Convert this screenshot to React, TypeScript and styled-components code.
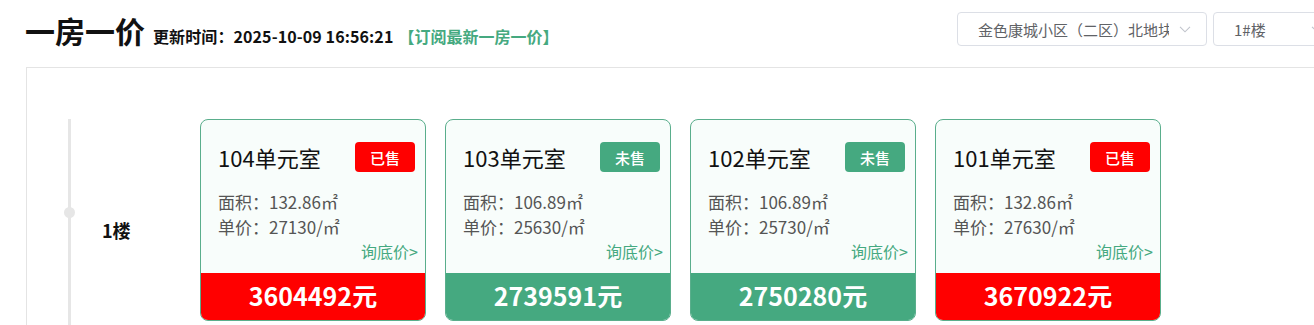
import React from "react";
import styled, { createGlobalStyle } from "styled-components";

const GREEN = "#45a980";
const RED = "#ff0000";

const Global = createGlobalStyle`
  html, body { margin: 0; padding: 0; background: #fff; overflow: hidden; }
  body { font-family: "Noto Sans CJK SC", "Noto Sans", sans-serif; color: #111; }
`;

const Page = styled.div`
  width: 1339px;
`;

const Header = styled.div`
  display: flex;
  align-items: flex-start;
  justify-content: space-between;
  height: 67px;
  padding: 0 0 0 25px;
  box-sizing: border-box;
`;

const TitleGroup = styled.div`
  display: flex;
  align-items: baseline;
  padding-top: 9px;
`;

const Title = styled.h1`
  margin: 0;
  font-size: 30px;
  font-weight: 700;
  line-height: 42px;
  color: #111;
`;

const UpdateTime = styled.span`
  margin-left: 8px;
  font-size: 16px;
  font-weight: 700;
  letter-spacing: 0.1px;
  color: #111;
`;

const SubscribeLink = styled.a`
  margin-left: 5px;
  font-size: 16px;
  font-weight: 700;
  color: ${GREEN};
  text-decoration: none;
`;

const Selects = styled.div`
  display: flex;
  gap: 6px;
  padding-top: 12px;
`;

const Select = styled.div<{ $w: number }>`
  width: ${(p) => p.$w}px;
  height: 34px;
  box-sizing: border-box;
  border: 1px solid #dcdfe6;
  border-radius: 4px;
  display: flex;
  align-items: center;
  padding: 0 15px 0 20px;
  gap: 10px;
  font-size: 15px;
  color: #606266;
`;

const SelectText = styled.span`
  flex: 1;
  white-space: nowrap;
  overflow: hidden;
`;

const Chevron = () => (
  <svg width="12" height="12" viewBox="0 0 12 12" fill="none">
    <path d="M1 3.8l5 5 5-5" stroke="#c0c4cc" strokeWidth="1.1" />
  </svg>
);

const Panel = styled.div`
  margin-left: 26px;
  border: 1px solid #e4e4e4;
  border-right: none;
  height: 300px;
  padding-top: 51px;
  box-sizing: border-box;
`;

const FloorRow = styled.div`
  display: flex;
  align-items: flex-start;
`;

const FloorCol = styled.div`
  width: 173px;
  flex: none;
  display: flex;
  align-self: stretch;
  padding-left: 41px;
  box-sizing: border-box;
  min-height: 220px;
`;

const Track = styled.div`
  position: relative;
  width: 3px;
  background: #e6e6e6;
`;

const Dot = styled.span`
  position: absolute;
  left: -4px;
  top: 88px;
  width: 11px;
  height: 11px;
  border-radius: 50%;
  background: #e6e6e6;
`;

const FloorLabel = styled.div`
  margin-left: 31px;
  padding-top: 98px;
  font-size: 18px;
  font-weight: 700;
  line-height: 26px;
  color: #111;
`;

const Cards = styled.div`
  display: flex;
  gap: 19px;
`;

const Card = styled.div`
  width: 226px;
  height: 202px;
  box-sizing: border-box;
  border: 1px solid #5aae8c;
  border-radius: 8px;
  background: #f8fdfb;
  overflow: hidden;
  display: flex;
  flex-direction: column;
`;

const CardBody = styled.div`
  flex: 1;
  padding: 22px 10px 0 17px;
  display: flex;
  flex-direction: column;
`;

const CardHead = styled.div`
  display: flex;
  align-items: center;
  justify-content: space-between;
  height: 30px;
`;

const RoomName = styled.div`
  font-size: 22px;
  line-height: 30px;
  color: #111;
`;

const Badge = styled.span<{ $sold: boolean }>`
  width: 60px;
  height: 30px;
  border-radius: 4px;
  background: ${(p) => (p.$sold ? RED : GREEN)};
  color: #fff;
  font-size: 15px;
  font-weight: 500;
  display: flex;
  align-items: center;
  justify-content: center;
`;

const Info = styled.div`
  margin-top: 17px;
  font-size: 17px;
  line-height: 25px;
  color: #555;
`;

const Inquire = styled.div`
  align-self: flex-end;
  margin-right: -3px;
  font-size: 16px;
  line-height: 25px;
  color: ${GREEN};
`;

const PriceBar = styled.div<{ $sold: boolean }>`
  height: 47px;
  flex: none;
  background: ${(p) => (p.$sold ? RED : GREEN)};
  color: #fff;
  font-size: 25px;
  font-weight: 700;
  line-height: 1;
  padding-bottom: 2px;
  box-sizing: border-box;
  display: flex;
  align-items: center;
  justify-content: center;
`;

const rooms = [
  { name: "104单元室", sold: true, area: "132.86", unit: "27130", total: "3604492" },
  { name: "103单元室", sold: false, area: "106.89", unit: "25630", total: "2739591" },
  { name: "102单元室", sold: false, area: "106.89", unit: "25730", total: "2750280" },
  { name: "101单元室", sold: true, area: "132.86", unit: "27630", total: "3670922" },
];

export default function App() {
  return (
    <Page>
      <Global />
      <Header>
        <TitleGroup>
          <Title>一房一价</Title>
          <UpdateTime>更新时间：2025-10-09 16:56:21</UpdateTime>
          <SubscribeLink href="#">【订阅最新一房一价】</SubscribeLink>
        </TitleGroup>
        <Selects>
          <Select $w={250}>
            <SelectText>金色康城小区（二区）北地块</SelectText>
            <Chevron />
          </Select>
          <Select $w={126}>
            <SelectText>1#楼</SelectText>
            <Chevron />
          </Select>
        </Selects>
      </Header>
      <Panel>
        <FloorRow>
          <FloorCol>
            <Track>
              <Dot />
            </Track>
            <FloorLabel>1楼</FloorLabel>
          </FloorCol>
          <Cards>
            {rooms.map((r) => (
              <Card key={r.name}>
                <CardBody>
                  <CardHead>
                    <RoomName>{r.name}</RoomName>
                    <Badge $sold={r.sold}>{r.sold ? "已售" : "未售"}</Badge>
                  </CardHead>
                  <Info>
                    <div>面积：{r.area}㎡</div>
                    <div>单价：{r.unit}/㎡</div>
                  </Info>
                  <Inquire>询底价&gt;</Inquire>
                </CardBody>
                <PriceBar $sold={r.sold}>{r.total}元</PriceBar>
              </Card>
            ))}
          </Cards>
        </FloorRow>
      </Panel>
    </Page>
  );
}
